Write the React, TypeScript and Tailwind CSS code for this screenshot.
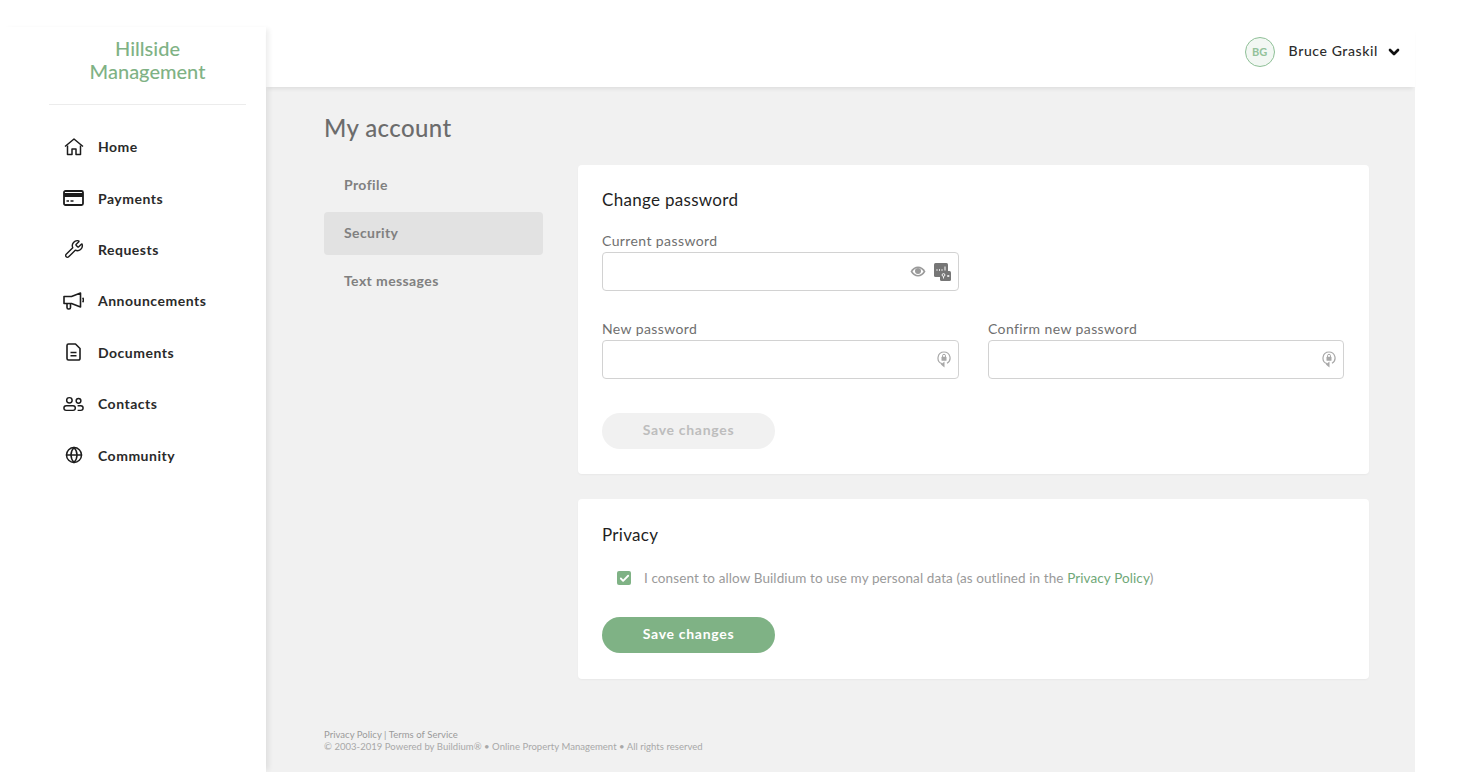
import { Wrench, Globe, Check, ChevronDown } from 'lucide-react';

function HomeIcon() {
  return (
    <svg width="20" height="18" viewBox="0 0 20 18" fill="none" stroke="#1c1c1c" strokeWidth="1.500" strokeLinejoin="round">
      <path d="M1 8.500 10 1l9 7.500" />
      <path d="M3.500 7.500V16.500H8v-5.500h4v5.500h4.500V7.500" />
    </svg>
  );
}

function CardIcon() {
  return (
    <svg width="21" height="16" viewBox="0 0 21 16" fill="none">
      <rect x="1" y="1" width="19" height="14" rx="1.500" stroke="#1c1c1c" strokeWidth="1.800" />
      <rect x="1" y="3" width="19" height="4" fill="#1c1c1c" />
      <path d="M3.500 11h2.500M7.500 11h3" stroke="#1c1c1c" strokeWidth="1.600" />
    </svg>
  );
}

function MegaphoneIcon() {
  return (
    <svg width="21" height="18" viewBox="0 0 21 18" fill="none" stroke="#1c1c1c" strokeWidth="1.600" strokeLinejoin="round">
      <path d="M1 4.500h7.500L17.500 1v14l-9-3.500H1z" />
      <path d="M4 11.500v4a1.500 1.500 0 0 0 1.500 1.500h.5a1.500 1.500 0 0 0 1.500-1.500v-4" />
      <path d="M19.500 6a2.500 2.500 0 0 1 0 4" />
    </svg>
  );
}

function DocumentIcon() {
  return (
    <svg width="15" height="18" viewBox="0 0 15 18" fill="none" stroke="#1c1c1c" strokeWidth="1.600" strokeLinejoin="round">
      <path d="M2.500 1H9.500L14 5.500V15.500a1.500 1.500 0 0 1-1.500 1.500h-10A1.500 1.500 0 0 1 1 15.500v-13A1.500 1.500 0 0 1 2.500 1z" />
      <path d="M4.500 9.500h6M4.500 12.800h6" />
    </svg>
  );
}

function ContactsIcon() {
  return (
    <svg width="23" height="16" viewBox="0 0 23 16" fill="none" stroke="#1c1c1c" strokeWidth="1.600">
      <circle cx="7" cy="4" r="3" />
      <circle cx="17" cy="4.500" r="2.600" />
      <rect x="1" y="10" width="12.500" height="5" rx="2.500" />
      <path d="M16 10h3.500a2.500 2.500 0 0 1 0 5h-3.500" />
    </svg>
  );
}

function EyeIcon() {
  return (
    <svg width="16" height="11" viewBox="0 0 16 11">
      <path d="M0.500 5.500C2.500 2 5 0.500 8 0.500s5.500 1.500 7.500 5c-2 3.500-4.500 5-7.500 5s-5.500-1.500-7.500-5z" fill="#9a9a9a" />
      <path d="M2.500 5.500C4 3.200 5.800 2 8 2s4 1.200 5.500 3.500C12 7.800 10.200 9 8 9S4 7.800 2.500 5.500z" fill="#fff" />
      <circle cx="8" cy="5" r="3" fill="#9a9a9a" />
    </svg>
  );
}

function PasswordKeyIcon() {
  return (
    <svg width="17" height="18" viewBox="0 0 17 18">
      <rect x="0" y="0" width="14" height="14" rx="1.500" fill="#767676" />
      <rect x="6" y="8" width="11" height="10" rx="1.500" fill="#767676" />
      <path d="M2.500 7h1M5 7h1M7.500 7h1" stroke="#fff" strokeWidth="1.300" />
      <path d="M11 3.500v4" stroke="#fff" strokeWidth="1" />
      <circle cx="9.500" cy="12" r="1.400" fill="none" stroke="#fff" strokeWidth="0.900" />
      <path d="M9.500 13.500v2M13 13h2.500M14.200 12v2" stroke="#fff" strokeWidth="0.900" />
    </svg>
  );
}

function LockCycleIcon() {
  return (
    <svg width="14" height="17" viewBox="0 0 14 17" fill="none">
      <path d="M7 1a6 6 0 0 1 3 11.200" stroke="#a8a8a8" strokeWidth="1.200" />
      <path d="M7 1a6 6 0 0 0-2 11.650" stroke="#a8a8a8" strokeWidth="1.200" />
      <path d="M7.500 10.500v6L3.800 13.500z" fill="#a8a8a8" />
      <rect x="4.500" y="5.800" width="5" height="4" rx="0.600" fill="#a8a8a8" />
      <path d="M5.500 6V4.800a1.500 1.500 0 0 1 3 0V6" stroke="#a8a8a8" strokeWidth="1" />
    </svg>
  );
}

const navItems = [
  { label: 'Home', icon: <HomeIcon /> },
  { label: 'Payments', icon: <CardIcon /> },
  { label: 'Requests', icon: <Wrench size={20} strokeWidth={1.7} /> },
  { label: 'Announcements', icon: <MegaphoneIcon /> },
  { label: 'Documents', icon: <DocumentIcon /> },
  { label: 'Contacts', icon: <ContactsIcon /> },
  { label: 'Community', icon: <Globe size={18} strokeWidth={2} /> },
];

function PasswordField({ label, children }: { label: string; children: React.ReactNode }) {
  return (
    <div>
      <label className="block text-[14px] leading-[19px] tracking-[0.4px] text-[#6f6f6f]">{label}</label>
      <div className="mt-[2px] h-[39px] rounded border border-[#d2d2d2] bg-white flex items-center justify-end gap-[8px] pr-[7px]">
        {children}
      </div>
    </div>
  );
}

export default function App() {
  return (
    <div className="flex w-full h-[772px] overflow-hidden bg-white font-['Lato','Liberation_Sans',sans-serif]">
      {/* Sidebar */}
      <aside className="w-[266px] shrink-0 mt-[27px] pt-[10px] z-10 shadow-[5px_0_5px_-2px_rgba(0,0,0,0.07)]">
        <div className="ml-[49px] mr-[20px] h-[68px] border-b border-[#ececec] text-center text-[20px] leading-[23px] font-medium text-[#7fb285]">
          Hillside<br />Management
        </div>
        <nav className="mt-[16px] pl-[63px]">
          {navItems.map((item) => (
            <div key={item.label} className="flex items-center h-[51.4px] text-[14px] font-bold tracking-[0.5px] text-[#2a2a2a]">
              <span className="w-[21px] flex justify-center text-[#1c1c1c]">{item.icon}</span>
              <span className="ml-[14px]">{item.label}</span>
            </div>
          ))}
        </nav>
      </aside>

      <div className="w-[1149px] shrink-0 mt-[27px] flex flex-col">
        {/* Top bar */}
        <header className="h-[60px] shrink-0 bg-white shadow-[0_4px_4px_-2px_rgba(0,0,0,0.08)] z-[1] flex items-center justify-end pr-[13px] pb-[11px]">
          <div className="w-[30px] h-[30px] mt-[1px] rounded-full border border-[#8fc097] bg-[#f2f7f3] flex items-center justify-center text-[11px] font-bold text-[#93c29a]">
            BG
          </div>
          <span className="ml-[14px] mb-[2px] text-[14px] font-medium tracking-[0.6px] text-[#2c2c2c]">Bruce Graskil</span>
          <ChevronDown size={16} strokeWidth={4} className="ml-[8px] text-[#111]" />
        </header>

        {/* Main */}
        <main className="flex-1 bg-[#f1f1f1] pl-[58px] pr-[46px]">
          <h1 className="mt-[26px] text-[24px] leading-[30px] font-medium tracking-[0.4px] text-[#6c6c6c]">My account</h1>
          <div className="mt-[22px] flex">
            <div className="w-[219px] shrink-0 mt-[-1px] flex flex-col gap-[5px] text-[14px] font-bold tracking-[0.4px] text-[#808080]">
              <div className="h-[43px] px-[20px] pb-[2px] flex items-center">Profile</div>
              <div className="h-[43px] px-[20px] pb-[2px] flex items-center rounded bg-[#e2e2e2]">Security</div>
              <div className="h-[43px] px-[20px] pb-[2px] flex items-center">Text messages</div>
            </div>
            <div className="ml-[35px] w-[791px] flex flex-col gap-[25px]">
              <section className="h-[309px] rounded bg-white px-[24px] pt-[24px] shadow-[0_1px_2px_rgba(0,0,0,0.04)]">
                <h2 className="text-[17px] leading-[22px] tracking-[0.3px] text-[#1f1f1f]">Change password</h2>
                <div className="mt-[20px] w-[357px]">
                  <PasswordField label="Current password">
                    <EyeIcon />
                    <PasswordKeyIcon />
                  </PasswordField>
                </div>
                <div className="mt-[28px] grid grid-cols-[357px_356px] gap-[29px]">
                  <PasswordField label="New password">
                    <LockCycleIcon />
                  </PasswordField>
                  <PasswordField label="Confirm new password">
                    <LockCycleIcon />
                  </PasswordField>
                </div>
                <button className="mt-[34px] w-[173px] h-[36px] pb-[3px] rounded-full bg-[#f1f1f1] text-[14px] font-bold tracking-[0.7px] text-[#bdbdbd]">
                  Save changes
                </button>
              </section>
              <section className="h-[180px] rounded bg-white px-[24px] pt-[25px] shadow-[0_1px_2px_rgba(0,0,0,0.04)]">
                <h2 className="text-[17px] leading-[22px] tracking-[0.3px] text-[#1f1f1f]">Privacy</h2>
                <div className="mt-[23px] ml-[15px] flex items-center">
                  <span className="w-[14px] h-[14px] rounded-[2px] bg-[#7fb285] flex items-center justify-center">
                    <Check size={11} strokeWidth={4} className="text-white" />
                  </span>
                  <p className="ml-[13px] text-[13.500px] leading-[18px] tracking-[0.1px] text-[#9a9a9a]">
                    I consent to allow Buildium to use my personal data (as outlined in the{' '}
                    <span className="text-[#6fa878]">Privacy Policy</span>)
                  </p>
                </div>
                <button className="mt-[30px] w-[173px] h-[36px] pb-[3px] rounded-full bg-[#7fb285] text-[14px] font-bold tracking-[0.7px] text-white">
                  Save changes
                </button>
              </section>
            </div>
          </div>
          <footer className="mt-[50px] text-[9.500px] leading-[12px] tracking-[0.04px] text-[#a8a8a8]">
            <p className="text-[#9a9a9a]">Privacy Policy | Terms of Service</p>
            <p>© 2003-2019 Powered by Buildium® • Online Property Management • All rights reserved</p>
          </footer>
        </main>
      </div>
    </div>
  );
}
